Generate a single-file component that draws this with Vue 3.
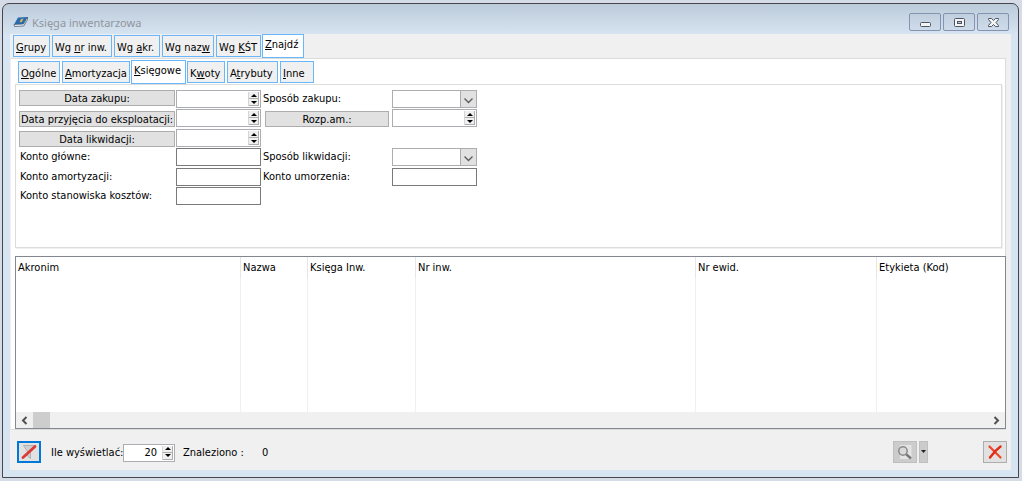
<script setup>
import { ref } from 'vue'

const mainTabs = [
  { pre: '', key: 'G', post: 'rupy', w: 'w37' },
  { pre: 'Wg ', key: 'n', post: 'r inw.', w: 'w60' },
  { pre: 'Wg ', key: 'a', post: 'kr.', w: 'w46' },
  { pre: 'Wg naz', key: 'w', post: '', w: 'w52' },
  { pre: 'Wg ', key: 'K', post: 'ŚT', w: 'w45' },
  { pre: '', key: 'Z', post: 'najdź', w: 'w42' },
]
const subTabs = [
  { pre: '', key: 'O', post: 'gólne', w: 'w42' },
  { pre: '', key: 'A', post: 'mortyzacja', w: 'w68' },
  { pre: '', key: 'K', post: 'sięgowe', w: 'w55' },
  { pre: 'K', key: 'w', post: 'oty', w: 'w38' },
  { pre: 'A', key: 't', post: 'rybuty', w: 'w51' },
  { pre: '', key: 'I', post: 'nne', w: 'w34' },
]
const mainTab = ref(5)
const subTab = ref(2)
const limit = ref('20')
const columns = ['Akronim', 'Nazwa', 'Księga Inw.', 'Nr inw.', 'Nr ewid.', 'Etykieta (Kod)']
</script>

<template>
  <div class="desktop">
    <main class="window">
      <header class="titlebar">
        <svg class="book" width="16" height="16" viewBox="0 0 16 16" aria-hidden="true">
          <path d="M5 3.5 14.5 3 10.5 10 1 10.5Z" fill="#2a6aae" />
          <path d="M1 10.5 10.5 10 14.5 3 14.5 5.5 10.8 12 1.5 12.5Z" fill="#eef2f6" stroke="#35516f" stroke-width=".7" />
          <path d="M8 5 10.5 4.5 8.8 8 6.5 8.3Z" fill="#d5b957" />
        </svg>
        <h1>Księga inwentarzowa</h1>
        <div class="winbtns">
          <button type="button" aria-label="Minimalizuj">
            <svg width="13" height="11" viewBox="0 0 13 11"><rect x="1.5" y="5.5" width="10" height="4" rx="1" fill="#f4f4f2" stroke="#4c5566" /></svg>
          </button>
          <button type="button" aria-label="Maksymalizuj">
            <svg width="13" height="11" viewBox="0 0 13 11"><rect x="1.5" y="1.5" width="10" height="8" rx="1" fill="#f4f4f2" stroke="#4c5566" /><rect x="4.5" y="4.5" width="4" height="2" fill="#b9c8dc" stroke="#4c5566" /></svg>
          </button>
          <button type="button" aria-label="Zamknij">
            <svg width="13" height="11" viewBox="0 0 13 11"><path d="M1.5 1.5H4.5L6.5 3.5 8.5 1.5H11.5V2.5L9 5.5 11.5 8.5V9.5H8.5L6.5 7.5 4.5 9.5H1.5V8.5L4 5.5 1.5 2.5Z" fill="#f4f4f2" stroke="#4c5566" /></svg>
          </button>
        </div>
      </header>

      <div class="client">
        <nav class="tabs main-tabs" role="tablist">
          <button v-for="(t, i) in mainTabs" :key="i" type="button" role="tab" :class="['tab', t.w, { active: i === mainTab }]" :aria-selected="i === mainTab" @click="mainTab = i">{{ t.pre }}<u>{{ t.key }}</u>{{ t.post }}</button>
        </nav>
        <section class="page">
          <nav class="tabs sub-tabs" role="tablist">
            <button v-for="(t, i) in subTabs" :key="i" type="button" role="tab" :class="['tab', t.w, { active: i === subTab }]" :aria-selected="i === subTab" @click="subTab = i">{{ t.pre }}<u>{{ t.key }}</u>{{ t.post }}</button>
          </nav>
          <form class="criteria" @submit.prevent>
            <button type="button" class="push">Data zakupu:</button>
            <div class="spin"><input type="text" aria-label="Data zakupu"><span class="arrows"><button type="button" class="up" aria-label="Więcej"></button><button type="button" class="down" aria-label="Mniej"></button></span></div>
            <label for="sz">Sposób zakupu:</label>
            <div class="combo"><select id="sz"><option></option></select><svg width="9" height="6" viewBox="0 0 9 6"><path d="M.5 .5 4.5 4.5 8.5 .5" fill="none" stroke="#5c5c5c" stroke-width="1.3" /></svg></div>

            <button type="button" class="push low">Data przyjęcia do eksploatacji:</button>
            <div class="spin"><input type="text" aria-label="Data przyjęcia do eksploatacji"><span class="arrows"><button type="button" class="up" aria-label="Więcej"></button><button type="button" class="down" aria-label="Mniej"></button></span></div>
            <button type="button" class="push low right">Rozp.am.:</button>
            <div class="spin"><input type="text" aria-label="Rozp.am."><span class="arrows"><button type="button" class="up" aria-label="Więcej"></button><button type="button" class="down" aria-label="Mniej"></button></span></div>

            <button type="button" class="push low">Data likwidacji:</button>
            <div class="spin"><input type="text" aria-label="Data likwidacji"><span class="arrows"><button type="button" class="up" aria-label="Więcej"></button><button type="button" class="down" aria-label="Mniej"></button></span></div>

            <label for="kg" class="first">Konto główne:</label>
            <input id="kg" class="text" type="text">
            <label for="sl">Sposób likwidacji:</label>
            <div class="combo"><select id="sl"><option></option></select><svg width="9" height="6" viewBox="0 0 9 6"><path d="M.5 .5 4.5 4.5 8.5 .5" fill="none" stroke="#5c5c5c" stroke-width="1.3" /></svg></div>

            <label for="ka" class="first">Konto amortyzacji:</label>
            <input id="ka" class="text" type="text">
            <label for="ku">Konto umorzenia:</label>
            <input id="ku" class="text" type="text">

            <label for="ks" class="first">Konto stanowiska kosztów:</label>
            <input id="ks" class="text" type="text">
          </form>

          <div class="list">
            <table>
              <colgroup><col class="c1"><col class="c2"><col class="c3"><col class="c4"><col class="c5"><col></colgroup>
              <thead><tr><th v-for="c in columns" :key="c" scope="col">{{ c }}</th></tr></thead>
              <tbody><tr><td v-for="c in columns" :key="c"></td></tr></tbody>
            </table>
            <div class="scroll">
              <button type="button" aria-label="W lewo"><svg width="7" height="9" viewBox="0 0 7 9"><path d="M5.5 1 2 4.5 5.5 8" fill="none" stroke="#505050" stroke-width="2" /></svg></button>
              <span class="thumb"></span>
              <button type="button" class="end" aria-label="W prawo"><svg width="7" height="9" viewBox="0 0 7 9"><path d="M1.5 1 5 4.5 1.5 8" fill="none" stroke="#505050" stroke-width="2" /></svg></button>
            </div>
          </div>
        </section>

        <footer class="bar">
          <button type="button" class="tool focus" aria-label="Filtr">
            <svg width="16" height="16" viewBox="0 0 16 16"><path d="M2.5 1.5H13.5L9.5 7.5V14.5L6.5 12V7.5Z" fill="#cfcfcf" stroke="#b0b0b0" /><path d="M2 13.5 14 2.5" stroke="#dc3a36" stroke-width="2.8" stroke-linecap="round" /></svg>
          </button>
          <label for="lim" class="lim">Ile wyświetlać:</label>
          <div class="spin num"><input id="lim" v-model="limit" type="text"><span class="arrows"><button type="button" class="up" aria-label="Więcej"></button><button type="button" class="down" aria-label="Mniej"></button></span></div>
          <span class="found">Znaleziono :</span>
          <output>0</output>
          <button type="button" class="tool off" aria-label="Podgląd">
            <svg width="16" height="16" viewBox="0 0 16 16"><path d="M3 1H14.5V15H3Z" fill="#e4e4e4" /><circle cx="6" cy="7" r="4.2" fill="#dadada" stroke="#8a8a8a" stroke-width="1.5" /><path d="M9.3 10.3 14 14.5" stroke="#757575" stroke-width="2.4" /></svg>
          </button>
          <button type="button" class="tool off drop" aria-label="Opcje podglądu">
            <svg width="5" height="3" viewBox="0 0 5 3"><path d="M0 0H5L2.5 3Z" fill="#222" /></svg>
          </button>
          <button type="button" class="tool close" aria-label="Zamknij okno">
            <svg width="16" height="16" viewBox="0 0 16 16"><path d="M2.5 2.5 8 8 13.5 13.5" fill="none" stroke="#f0452a" stroke-width="2.2" stroke-linecap="round" /><path d="M13.5 2.5Q8 6.5 3 13.5" fill="none" stroke="#e32a14" stroke-width="2.4" stroke-linecap="round" /></svg>
          </button>
        </footer>
      </div>
    </main>
  </div>
</template>

<style>
body { margin: 0; }
</style>

<style scoped>
.desktop, .desktop * { box-sizing: border-box; }
.desktop { height: 100vh; min-height: 400px; padding: 3px 3px 3px 2px; display: flex; background: #d5dce8; font: 11px/14px "DejaVu Sans Condensed", Tahoma, sans-serif; color: #000; }
button, input, select { font: inherit; color: inherit; margin: 0; padding: 0; border-radius: 0; }
.window { flex: 1; min-width: 0; display: flex; flex-direction: column; padding: 0 7px 7px; border: 1px solid #46464c; border-radius: 7px 7px 0 0; background: linear-gradient(#bccbda, #d7e4f2 31px); }
.titlebar { height: 30px; display: flex; align-items: center; padding: 6px 2px 0 3px; }
.titlebar h1 { margin: 0 0 0 3px; padding-top: 2px; font: 11px/16px "Noto Sans", sans-serif; color: #8f969e; flex: 1; }
.winbtns { display: flex; gap: 2px; }
.winbtns button { width: 32px; height: 18px; display: flex; align-items: center; justify-content: center; border: 1px solid #8593b0; border-radius: 2px; background: linear-gradient(#c2cfde, #cddbea); }
.client { flex: 1; display: flex; flex-direction: column; min-height: 0; background: #f0f0f0; }
.tabs { display: flex; align-items: flex-end; }
.main-tabs { height: 24px; padding-left: 3px; }
.sub-tabs { height: 25px; padding-left: 7px; }
.tab { height: 22px; margin: 0 2px 1px 0; border: 1px solid #69b6fa; background: #f0f0f0; text-align: left; padding: 3px 0 0 2px; white-space: nowrap; }
.tab.active { height: 24px; margin: 0 1px 0 -1px; background: #fff; padding: 0 0 2px 2px; }
.w34 { width: 34px; } .w37 { width: 37px; } .w38 { width: 38px; } .w42 { width: 42px; } .w45 { width: 45px; } .w46 { width: 46px; }
.w51 { width: 51px; } .w52 { width: 52px; } .w55 { width: 55px; } .w60 { width: 60px; } .w68 { width: 68px; }
.page { flex: 1; min-height: 0; display: flex; flex-direction: column; margin-right: 5px; border: 1px solid #dcdcdc; border-left-color: #f0f0f0; background: #fff; }
.criteria { height: 164px; margin: 0 3px 0 4px; padding: 5px 0 0 3px; border: 1px solid #dcdcdc; box-shadow: 1px 1px #f0f0f0; display: grid; grid-template-columns: 157px 87px 129px 85px; grid-template-rows: 19px 20px 19px 20px 19px 18px; align-content: start; align-items: start; }
.push { height: 16px; margin-right: 1px; padding-top: 2px; border: 1px solid #adadad; background: #e1e1e1; line-height: 12px; white-space: nowrap; }
.low { margin-top: 2px; }
.right { margin: 2px 3px 0 2px; }
.criteria label { line-height: 18px; white-space: nowrap; }
.first { padding-left: 1px; grid-column: 1; }
.push:not(.right) { grid-column: 1; }
.text { width: 85px; height: 18px; border: 1px solid #7a7a7a; background: #fff; }
.spin { width: 85px; height: 18px; display: flex; border: 1px solid #abadb3; background: #fff; }
.spin input { flex: 1; min-width: 0; border: 0; background: transparent; outline: none; }
.arrows { width: 11px; display: flex; flex-direction: column; margin: 1px; background: #f0f0f0; border-right: 1px solid #adadad; border-left: 1px solid #d5d5d5; }
.arrows button { flex: 1; border: 0; background: transparent; display: flex; align-items: center; justify-content: center; border-bottom: 1px solid #adadad; }
.up::before, .down::before { content: ""; border: 3px solid transparent; }
.up::before { border-top: 0; border-bottom-color: #000; }
.down::before { border-bottom: 0; border-top-color: #000; }
.combo { position: relative; width: 85px; height: 18px; }
.combo select { appearance: none; width: 100%; height: 100%; display: block; border: 1px solid #adadad; background: linear-gradient(#adadad, #adadad) right 15px top / 1px 100% no-repeat, linear-gradient(#e1e1e1, #e1e1e1) right / 15px 100% no-repeat #fff; }
.combo svg { position: absolute; right: 4px; top: 8px; pointer-events: none; }
.list { flex: 1; min-height: 0; margin: 8px -1px 0 4px; border: 1px solid #828790; display: flex; flex-direction: column; background: #fff; }
table { width: 100%; height: calc(100% - 16px); border-collapse: separate; border-spacing: 0; table-layout: fixed; }
thead tr { height: 21px; }
th { font-weight: 400; text-align: left; padding: 0 0 0 2px; border-right: 1px solid #e5e5e5; white-space: nowrap; }
td { border-right: 1px solid #f0f0f0; padding: 0; }
th:last-child, td:last-child { border: 0; }
.c1 { width: 225px; } .c2 { width: 67px; } .c3 { width: 108px; } .c4 { width: 280px; } .c5 { width: 181px; }
.scroll { height: 16px; display: flex; background: #f0f0f0; }
.scroll button { width: 17px; border: 0; background: transparent; display: flex; align-items: center; justify-content: center; }
.thumb { width: 17px; background: #cdcdcd; }
.scroll .end { margin-left: auto; }
.bar { height: 40px; display: flex; align-items: center; padding: 3px 4px 0 7px; }
.tool { width: 24px; height: 22px; display: flex; align-items: center; justify-content: center; border: 1px solid #adadad; background: #e1e1e1; }
.focus { border: 2px solid #0078d7; }
.lim, .found, output { padding-top: 2px; }
.lim { margin-left: 10px; width: 72px; white-space: nowrap; }
.num { width: 52px; margin-top: 2px; }
.num input { text-align: right; padding-right: 4px; }
.found { margin-left: 8px; width: 79px; white-space: nowrap; }
.off { background: #ccc; border-color: #bfbfbf; margin-left: auto; }
.off.drop { width: 9px; margin-left: 2px; }
.close { margin-left: 55px; }
</style>
